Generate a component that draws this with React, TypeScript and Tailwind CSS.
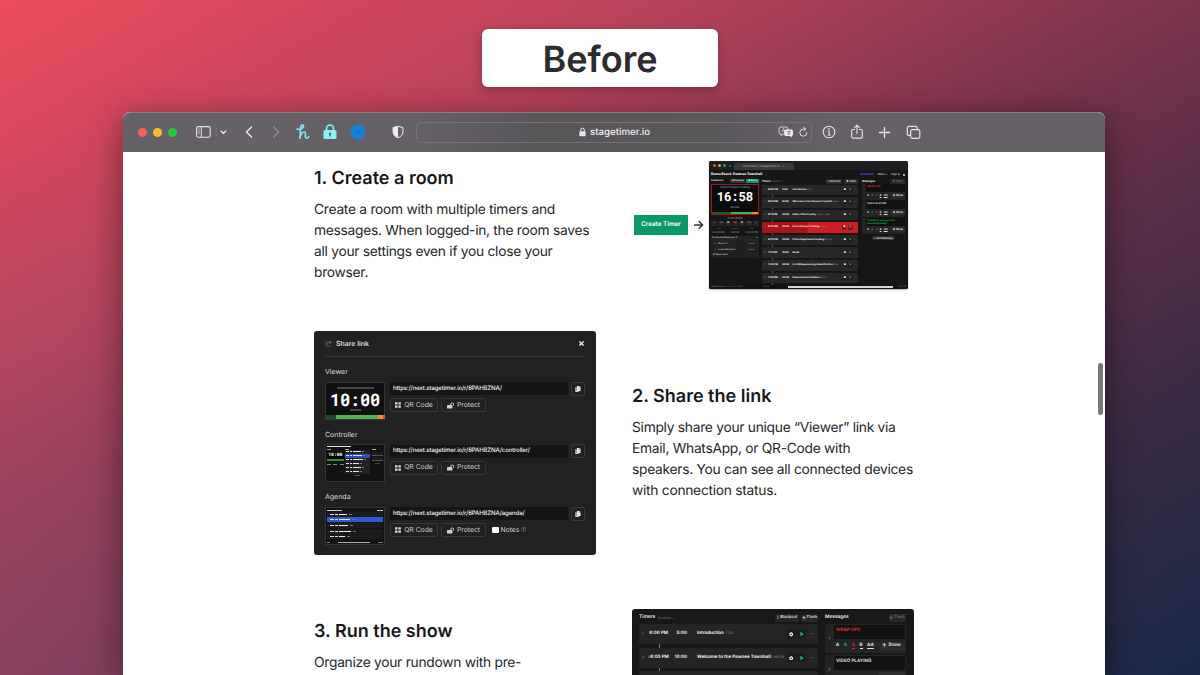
import React from "react";
import {
  FaArrowUp,
  FaCopy,
  FaLockOpen,
  FaPlay,
  FaCog,
  FaRegQuestionCircle,
  FaTimes,
  FaShareSquare,
} from "react-icons/fa";

const Dot = ({ c }: { c: string }) => <span className={`h-[9px] w-[9px] rounded-full ${c}`} />;

function Toolbar() {
  return (
    <div className="flex h-10 w-full shrink-0 items-center rounded-t-[7px] border-t border-[#8b7f86] bg-[linear-gradient(90deg,#656167_0%,#656167_30%,#59565a_42%,#5a575b_60%,#656167_72%,#656167_100%)] pb-px text-[#e6e4e7]">
      <div className="ml-[15px] flex gap-[6px]">
        <Dot c="bg-[#f2605a]" />
        <Dot c="bg-[#f6bb35]" />
        <Dot c="bg-[#2dc540]" />
      </div>
      <svg className="ml-[18px] shrink-0" width="34" height="14" viewBox="0 0 34 14" fill="none" stroke="currentColor">
        <rect x="1.6" y="1.6" width="13.6" height="10.6" rx="1.6" strokeWidth="1.1" />
        <path d="M6.3 1.6v10.6" strokeWidth="1" />
        <path d="M3 4.2h1.8M3 6.2h1.8M3 8.2h1.8" strokeWidth=".8" />
        <path d="M21.3 1v12" stroke="#79757b" strokeWidth="1" />
        <path d="M26 6l2.4 2.4L30.8 6" strokeWidth="1.4" strokeLinecap="round" strokeLinejoin="round" />
      </svg>
      <svg className="ml-[14px] shrink-0" width="44" height="14" viewBox="0 0 44 14" fill="none" strokeLinecap="round" strokeLinejoin="round">
        <path d="M8.6 2L3.4 7l5.2 5" stroke="#f1eff2" strokeWidth="1.3" />
        <path d="M30.6 2l5 5-5 5" stroke="#908c93" strokeWidth="1.2" />
      </svg>
      <svg className="ml-[7px] shrink-0" width="18" height="18" viewBox="0 0 18 18" fill="none" stroke="#86e4f2" strokeWidth="1.7" strokeLinecap="round" strokeLinejoin="round">
        <path d="M3 6C5.500 6.800 9.800 5.200 9.600 3C9.400 1.400 7 1.800 6.600 4.600L6 15.200C6.300 11.600 8.300 8.900 10.300 9C12.300 9.200 11.200 12 11.300 13.700C11.500 15.600 13.600 15.400 14.800 13.800" />
      </svg>
      <svg className="ml-[10px] shrink-0" width="16" height="18" viewBox="0 0 16 18">
        <path d="M4.600 8V5.400a3.400 3.400 0 016.800 0V8" fill="none" stroke="#8df1f5" strokeWidth="1.600" />
        <rect x="1.500" y="7" width="13" height="9" rx="1.500" fill="#8df1f5" />
        <path d="M8 9.600a1.300 1.300 0 01.6 2.400v1.400H7.400V12A1.300 1.300 0 018 9.600z" fill="#4b676e" />
      </svg>
      <svg className="ml-[12px] shrink-0" width="16" height="16" viewBox="0 0 16 16">
        <circle cx="8" cy="8" r="7.400" fill="#1583d8" />
        <path d="M4.600 8.200l6-2.600-1.200 5-1.700-1.500z" fill="#1379c9" />
      </svg>
      <svg className="ml-[26px] shrink-0" width="12" height="14" viewBox="0 0 12 14">
        <path d="M6 1.300L10.900 2.600V7c0 2.800-2 4.700-4.900 5.700C3.100 11.700 1.100 9.800 1.100 7V2.600z" fill="none" stroke="#efedf0" strokeWidth="1" />
        <path d="M6 1.300V12.700C3.100 11.700 1.100 9.800 1.100 7V2.600z" fill="#efedf0" />
      </svg>
      <div className="ml-[12px] flex h-[21px] w-[396px] shrink-0 items-center rounded-[5px] border border-[#777279]">
        <svg className="ml-[162px]" width="7" height="10" viewBox="0 0 7 10">
          <path d="M1.700 4.500V3a1.800 1.800 0 013.600 0v1.500" fill="none" stroke="#e8e6e9" strokeWidth="1" />
          <rect x=".4" y="4.300" width="6.200" height="4.900" rx=".8" fill="#e8e6e9" />
        </svg>
        <span className="ml-[4px] w-[184px] pt-[2px] text-[9.700px] font-medium leading-none text-[#f3f1f4]">stagetimer.io</span>
        <svg className="ml-[4px]" width="16" height="12" viewBox="0 0 16 12">
          <path d="M3 1h5a2 2 0 012 2v3a2 2 0 01-2 2H5L3.200 9.600V8A2 2 0 011 6V3a2 2 0 012-2z" fill="none" stroke="#dcdadd" strokeWidth=".9" />
          <path d="M4 6l1.500-3.500L7 6M4.500 5h2" fill="none" stroke="#dcdadd" strokeWidth=".7" />
          <path d="M8 3.600h5.200A1.800 1.800 0 0115 5.400v2.800a1.800 1.800 0 01-1.400 1.800v1.500L11.800 10H8a1.800 1.800 0 01-1.800-1.800V5.400A1.800 1.800 0 018 3.600z" fill="#f1eff2" />
          <path d="M8.800 5.600h4M10.800 4.800v.8M9.200 8.600c1.600-.6 2.600-1.600 2.800-3M9.600 6.600c.6 1 1.600 1.700 2.800 2" fill="none" stroke="#605c62" strokeWidth=".7" />
        </svg>
        <svg className="ml-[4px]" width="12" height="12" viewBox="0 0 12 12" fill="none" stroke="#dddbde" strokeWidth="1" strokeLinecap="round" strokeLinejoin="round">
          <path d="M9 6.600A3.600 3.600 0 115.400 3H7.200M5.700 1l1.900 2-1.900 2" />
        </svg>
      </div>
      <svg className="ml-[10px] shrink-0" width="14" height="14" viewBox="0 0 14 14" fill="none" stroke="currentColor">
        <circle cx="7" cy="7" r="5.800" strokeWidth="1.100" />
        <path d="M5.700 6h1.500v4M5.500 10h3.200" strokeWidth="1" />
        <circle cx="7" cy="3.900" r=".8" fill="currentColor" stroke="none" />
      </svg>
      <svg className="ml-[14px] shrink-0" width="14" height="16" viewBox="0 0 14 16" fill="none" stroke="currentColor" strokeWidth="1.100" strokeLinecap="round" strokeLinejoin="round">
        <path d="M4.600 5.500H3a1.300 1.300 0 00-1.300 1.300v6A1.300 1.300 0 003 14.100h8a1.300 1.300 0 001.300-1.300v-6A1.300 1.300 0 0011 5.500H9.400M7 9.500V1.300M4.700 3.400L7 1.200l2.300 2.200" />
      </svg>
      <svg className="ml-[14px] shrink-0" width="13" height="13" viewBox="0 0 13 13" stroke="currentColor" strokeWidth="1.300" strokeLinecap="round">
        <path d="M6.500 1.500v10M1.500 6.500h10" />
      </svg>
      <svg className="ml-[15px] shrink-0" width="15" height="15" viewBox="0 0 15 15" fill="none" stroke="currentColor" strokeWidth="1.200">
        <rect x="4.600" y="4.600" width="9.200" height="8.800" rx="1.800" />
        <path d="M4.600 10.400H3a1.700 1.700 0 01-1.700-1.700V3A1.700 1.700 0 013 1.300h6.400A1.700 1.700 0 0111.100 3v1.600" />
      </svg>
    </div>
  );
}

type Timer = { time: string; len: string; name: string; who: string; live?: boolean };

const timers: Timer[] = [
  { time: "6:00 PM", len: "5:00", name: "Introduction", who: "Tom" },
  { time: "6:05 PM", len: "10:00", name: "Welcome to the Pawnee Townhall", who: "Leslie" },
  { time: "6:15 PM", len: "20:00", name: "State of the Country", who: "Leslie - Ben" },
  { time: "6:35 PM", len: "20:00", name: "School Project Trading", who: "Leslie", live: true },
  { time: "6:55 PM", len: "20:00", name: "Police Department Funding", who: "Donna" },
  { time: "7:15 PM", len: "15:00", name: "Break", who: "" },
  { time: "7:30 PM", len: "20:00", name: "Lot 48 Repurposing, Beautification", who: "Ann" },
  { time: "7:50 PM", len: "20:00", name: "Pawnee Great Initiative", who: "Chris" },
];

function MiniMessage({ text, color }: { text: string; color: string }) {
  return (
    <div className="flex h-[15.500px] w-[42.500px] flex-col rounded-[1px] bg-[#242424] pl-[4px]">
      <div className={`h-[7.500px] bg-[#111] px-[1px] pt-[.800px] text-[2.500px] font-bold leading-[3.200px] ${color}`}>{text}</div>
      <div className="flex flex-1 items-center gap-[2.300px] pl-[1px] text-[2.600px] font-bold leading-none text-[#ddd]">
        <span>A</span>
        <span className="text-[#22a34a]">A</span>
        <span className="text-[#dc2626]">A</span>
        <span className="underline">B</span>
        <span className="underline">AA</span>
        <span className="ml-auto rounded-[1px] bg-[#2d2d2d] px-[1.500px] py-[1px]">⬆ Show</span>
      </div>
    </div>
  );
}

function ControllerShot() {
  return (
    <div className="flex h-[128px] w-[199px] flex-col overflow-hidden rounded-[2px] bg-[#161616] text-[#e5e5e5] shadow-[0_1px_2px_rgba(0,0,0,0.3)]">
      <div className="flex h-[9px] shrink-0 items-center bg-[#1e1f20] pl-[4px]">
        <span className="h-[2.500px] w-[2.500px] rounded-full bg-[#e0443e]" />
        <span className="ml-[2.500px] h-[2.500px] w-[2.500px] rounded-full bg-[#d9a52a]" />
        <span className="ml-[2.500px] h-[2.500px] w-[2.500px] rounded-full bg-[#27a83a]" />
        <span className="ml-[3px] h-[2px] w-[2px] rounded-[.5px] bg-[#1f6d34]" />
        <div className="ml-[3px] flex h-[7px] w-[60px] items-center self-end rounded-t-[2px] bg-[#383a3b] px-[9px] text-[3.200px] leading-none text-[#a8a8a8]">
          <span className="whitespace-nowrap">Controller | stagetimer.io</span>
          <span className="ml-auto">×</span>
        </div>
      </div>
      <div className="flex h-[9px] shrink-0 items-center pl-[2px] pr-[3px] text-[2.800px] leading-none">
        <span className="text-[3.400px] font-extrabold text-white">Demo Event: Pawnee Townhall</span>
        <span className="ml-[2px] text-[#888]">✓</span>
        <span className="ml-auto font-bold text-[#5b56e8]">UPGRADE</span>
        <span className="ml-[4px]">Menu ⌄</span>
        <span className="ml-[3px]">Sign in</span>
        <span className="ml-[3px] h-[2px] w-[2px] rounded-full bg-[#ddd]" />
      </div>
      <div className="flex flex-1 overflow-hidden">
        <div className="ml-[2px] w-[48px] shrink-0">
          <div className="flex h-[4px] items-center text-[2.300px] font-semibold leading-none">
            <span>Dashboard</span>
            <span className="ml-auto rounded-[.8px] bg-[#333] px-[1.500px] py-[.8px]">⊞ Connect</span>
            <span className="ml-[1px] rounded-[.8px] bg-[#079669] px-[2px] py-[.8px]">⧉ Share</span>
          </div>
          <div className="mt-[1px] flex h-[31px] flex-col items-center overflow-hidden border border-[#971b1b] bg-[#0c0c0c]">
            <span className="text-[2.700px] font-medium leading-[4px] text-[#62bde9]">School Project Trading</span>
            <span className="mt-[1.500px] font-['Roboto_Mono','DejaVu_Sans_Mono',monospace] text-[12.600px] font-bold leading-[13px] tracking-[-0.300px] text-white">16:58</span>
            <span className="mt-[2px] text-[2.700px] font-medium leading-[3.500px] text-[#62bde9]">Donna</span>
            <div className="mt-auto flex h-[2px] w-full">
              <span className="w-[41%] bg-[#1c5a2c]" />
              <span className="w-[45%] bg-[#4caf50]" />
              <span className="flex-1 bg-[#ef8c35]" />
            </div>
          </div>
          <div className="mt-[1px] flex h-[4px] items-center justify-center text-[2.600px] font-semibold leading-none text-[#a36a6a]">6:35:10 PM</div>
          <div className="mt-[1px] flex h-[5px] justify-between gap-[.8px] text-[2.400px] leading-[4.500px]">
            {["«", "-1m", "■", "▮▮", "●", "+1m", "»"].map((s, i) => (
              <span key={i} className={`flex-1 rounded-[.5px] bg-[#262626] text-center ${i === 3 ? "text-[#e12d2d]" : "text-[#bbb]"}`}>{s}</span>
            ))}
          </div>
          <div className="mt-[2px] flex justify-between px-[1px] text-[2.300px] leading-[4px] text-[#aaa]">
            {["Start", "Duration", "End"].map((s, i) => (
              <span key={s} className="flex flex-col items-center leading-[4px]">
                <span className="text-[1.800px] leading-[3px] text-[#777]">{s}</span>
                <span>{["6:35:00 PM", "0:20:00", "6:55:00 PM"][i]}</span>
              </span>
            ))}
          </div>
          <div className="mt-[1px] flex h-[4.500px] items-center bg-[#242424] px-[1px] text-[2.400px] leading-none">
            Connected Devices: 2<span className="ml-auto">⋯</span>
          </div>
          <div className="mt-[.5px] bg-[#202020] px-[4px] text-[2.400px] leading-[5.500px]">
            <div className="flex">▹ &nbsp; Device 1<span className="ml-auto text-[#888]">viewer</span></div>
            <div className="flex">▹ &nbsp; Leslie Dachson<span className="ml-auto text-[#888]">viewer</span></div>
          </div>
          <div className="bg-[#202020] px-[2px] text-[2.400px] leading-[5.500px]">⇄ Share Link</div>
        </div>
        <div className="ml-[3px] w-[96px] shrink-0">
          <div className="flex h-[5px] items-center text-[2.600px] font-bold leading-none">
            Timers<span className="ml-[2px] font-normal text-[#777]">Actions ⌄</span>
            <span className="ml-auto rounded-[1px] bg-[#2a2a2a] px-[2px] py-[.8px] font-medium">▯ Blackout</span>
            <span className="ml-[1.500px] rounded-[1px] bg-[#2a2a2a] px-[2px] py-[.8px] font-medium">⬆ Flash</span>
          </div>
          <div className="mt-[.500px] flex flex-col">
            {timers.map((t, i) => (
              <React.Fragment key={t.time}>
                <div className={`flex h-[10.500px] shrink-0 items-center rounded-[1px] text-[2.400px] font-bold leading-none text-white ${t.live ? "bg-[linear-gradient(90deg,#a81417_0%,#a81417_47%,#cf1d22_48%,#cf1d22_100%)]" : "bg-[#272727]"}`}>
                  <span className="w-[6px] pl-[2px] font-normal text-[#777]">{i + 1}</span>
                  <span className="w-[14px] whitespace-nowrap">{t.time}</span>
                  <span className="w-[10.500px]">{t.len}</span>
                  <span className="whitespace-nowrap">
                    {t.name} <span className="font-normal text-[#999]">{t.who}</span>
                  </span>
                  <span className="ml-auto rounded-[.7px] bg-[#1b1b1b]/50 px-[1px] py-[1px]">●</span>
                  <span className={`ml-[1.500px] rounded-[.7px] bg-[#1b1b1b]/60 px-[1px] py-[1px] ${t.live ? "text-[#ff5252]" : "text-[#21b14b]"}`}>{t.live ? "▮▮" : "▶"}</span>
                  <span className="ml-[1.500px] mr-[1.500px] font-normal text-[#777]">⋯</span>
                </div>
                <div className="ml-[10px] h-[2.100px] w-[.6px] shrink-0 bg-[#555]" />
              </React.Fragment>
            ))}
          </div>
        </div>
        <div className="ml-[4px] w-[42.500px] shrink-0">
          <div className="flex h-[5px] items-center text-[2.600px] font-bold leading-none">
            Messages<span className="ml-auto rounded-[1px] bg-[#2a2a2a] px-[2px] py-[.8px] font-medium text-[#777]">⬆ Flash</span>
          </div>
          <div className="flex flex-col gap-[1.500px]">
            <MiniMessage text="WRAP UP!!" color="text-[#e5322d]" />
            <MiniMessage text="VIDEO PLAYING" color="text-[#dddddd]" />
            <MiniMessage text="Thanks to everyone for attending today!" color="text-[#1faa47]" />
          </div>
          <div className="mx-auto mt-[2px] w-[22px] rounded-[1px] bg-[#2b2b2b] text-center text-[2.600px] font-medium leading-[4.500px]">+ Add Message</div>
        </div>
      </div>
      <div className="flex h-[4px] shrink-0 items-center bg-[#111] px-[2px] text-[2.200px] leading-none text-[#888]">
        <span className="w-[50px] whitespace-nowrap">stagetimer.io v2.4 &nbsp; 6:37:51 PM</span>
        <span className="w-[27px] pl-[2px]">30:35</span>
        <span className="flex h-[1.500px] w-[105px] gap-[.6px]">
          {[8, 14, 20, 16, 20, 14, 13].map((w, i) => (
            <span key={i} className="h-full bg-[#d5d5d5]" style={{ width: w }} />
          ))}
        </span>
        <span className="ml-auto whitespace-nowrap">8:10 PM</span>
      </div>
    </div>
  );
}

const Bar = ({ c }: { c: string }) => <span className={`block h-[1px] shrink-0 ${c}`} />;

function ViewerThumb() {
  return (
    <div className="flex h-[38px] w-[60px] shrink-0 flex-col items-center border border-[#333] bg-[#101010]">
      <span className="mt-[4px] h-[2px] w-[37px] shrink-0 bg-[#484848]" />
      <span className="mt-[3px] font-['Roboto_Mono','DejaVu_Sans_Mono',monospace] text-[17.200px] font-bold leading-[16px] tracking-[-0.300px] text-white">10:00</span>
      <span className="mt-[1px] h-[2px] w-[11px] shrink-0 bg-[#484848]" />
      <div className="-mx-px mt-auto flex h-[4px] w-[60px] shrink-0">
        <span className="w-[10.500px] bg-[#1d4a2a]" />
        <span className="w-[42px] bg-[#4fb257]" />
        <span className="w-[5px] bg-[#f08c3c]" />
        <span className="flex-1 bg-[#e0483c]" />
      </div>
    </div>
  );
}

function ControllerThumb() {
  return (
    <div className="flex h-[38px] w-[60px] shrink-0 flex-col overflow-hidden border border-[#333] bg-[#131313] px-[1px] pt-[1px]">
      <Bar c="w-[24px] bg-[#e5e5e5]" />
      <div className="mt-[1.500px] flex">
        <div className="w-[17px]">
          <Bar c="w-[4px] bg-[#999]" />
          <div className="mt-[1px] h-[8px] bg-[#080808] text-center font-['Roboto_Mono','DejaVu_Sans_Mono',monospace] text-[4.700px] font-bold leading-[8px] text-white">10:00</div>
          <div className="h-[2px] bg-[#2f9146]" />
          <div className="mt-[3px] flex justify-between">
            <Bar c="w-[4px] bg-[#888]" />
            <Bar c="w-[4px] bg-[#888]" />
            <Bar c="w-[4px] bg-[#888]" />
          </div>
        </div>
        <div className="ml-[1px] flex w-[26px] flex-col">
          <Bar c="w-[4px] bg-[#aaa]" />
          {[16, 17, 18, 14, 16, 14].map((w, i) => (
            <div key={i} className={`mt-[.500px] flex h-[3.500px] items-center gap-[1px] px-[1px] ${i === 1 ? "bg-[#294bc4]" : "bg-[#222]"}`}>
              <Bar c="w-[3px] bg-[#ddd]" />
              <Bar c="w-[2px] bg-[#ddd]" />
              <span className="h-[1px] bg-[#e5e5e5]" style={{ width: w - 8 }} />
              <Bar c="w-[2px] bg-[#777]" />
            </div>
          ))}
          <span className="mx-auto mt-[1px] h-[.800px] w-[6px] bg-[#555]" />
        </div>
        <div className="ml-[2px] w-[11px]">
          <Bar c="w-[4px] bg-[#aaa]" />
          <div className="mt-[2px] h-[4px] border-b border-[#555] bg-[#1e1e1e]" />
          <div className="mt-[1px] h-[4px] border-b border-[#555] bg-[#1e1e1e]" />
          <span className="mx-auto mt-[2px] block h-[1px] w-[5px] bg-[#444]" />
        </div>
      </div>
    </div>
  );
}

function AgendaThumb() {
  return (
    <div className="flex h-[38px] w-[60px] shrink-0 flex-col border border-[#333] bg-[#131313] px-[1px] pt-[2px]">
      <div className="flex justify-between">
        <Bar c="w-[15px] bg-[#ccc]" />
        <Bar c="w-[6px] bg-[#ccc]" />
      </div>
      <div className="mt-[1px] flex flex-col gap-[.700px]">
        {[8, 11, 9, 12, 6].map((w, i) => (
          <div key={i} className={`flex h-[5px] items-center gap-[1.200px] px-[3px] ${i === 1 ? "bg-[#3157d6]" : "bg-[#1b1b1b]"}`}>
            <Bar c="w-[4px] bg-[#ddd]" />
            <Bar c="w-[3px] bg-[#ddd]" />
            <span className="h-[1px] bg-[#eee]" style={{ width: w }} />
            <Bar c="w-[3px] bg-[#777]" />
          </div>
        ))}
      </div>
      <div className="mt-auto flex items-center gap-[2px] pb-[.500px]">
        <Bar c="w-[3px] bg-[#777]" />
        <Bar c="ml-[6px] w-[32px] bg-[#aaa]" />
        <Bar c="ml-auto w-[5px] bg-[#777]" />
      </div>
    </div>
  );
}

function LinkRow({ label, url, thumb, notes }: { label: string; url: string; thumb: React.ReactNode; notes?: boolean }) {
  return (
    <div className="h-[62.500px]">
      <div className="h-[14.500px] text-[7px] leading-[10px] text-[#dcdcdc]">{label}</div>
      <div className="flex">
        {thumb}
        <div className="ml-[5px] flex-1">
          <div className="flex items-center">
            <div className="flex h-[13px] w-[178px] items-center rounded-[1.500px] bg-[#151515] px-[3px] pt-[1px] text-[6.100px] font-medium leading-none tracking-[-0.170px] text-[#f0f0f0]">{url}</div>
            <div className="ml-[3px] flex h-[14px] w-[14px] items-center justify-center rounded-[1.500px] border border-[#383838]">
              <FaCopy size={6} color="#e4e4e4" />
            </div>
          </div>
          <div className="mt-[2.500px] flex items-center text-[6.800px] leading-none text-[#cfcfcf]">
            <div className="flex h-[14px] w-[48px] items-center justify-center gap-[3px] rounded-[1.500px] border border-[#363636]">
              <svg width="6" height="6" viewBox="0 0 6 6" fill="#d6d6d6">
                <path d="M0 .3h2.500v2.300H0zM3.400 .3h2.500v2.300H3.400zM0 3.400h2.500v2.300H0zM3.400 3.400h2.500v2.300H3.400z" />
              </svg>
              QR Code
            </div>
            <div className="ml-[3px] flex h-[14px] w-[45px] items-center justify-center gap-[3px] rounded-[1.500px] border border-[#363636]">
              <FaLockOpen size={7} />
              Protect
            </div>
            {notes && (
              <div className="ml-[6px] flex items-center gap-[2px]">
                <span className="h-[6.500px] w-[6.500px] rounded-[1px] bg-white" />
                Notes
                <FaRegQuestionCircle size={5} color="#777" />
              </div>
            )}
          </div>
        </div>
      </div>
    </div>
  );
}

function ShareCard() {
  return (
    <div className="h-[224px] w-[282px] rounded-[3px] bg-[#212121] px-[11px]">
      <div className="flex h-[26px] items-center border-b border-[#353535] text-[7px] leading-none text-[#ececec]">
        <FaShareSquare size={7} color="#555" />
        <span className="ml-[4px] font-medium">Share link</span>
        <FaTimes className="ml-auto" size={7} color="#eee" />
      </div>
      <div className="pt-[10px]">
        <LinkRow label="Viewer" url="https://next.stagetimer.io/r/6PAH8ZNA/" thumb={<ViewerThumb />} />
        <LinkRow label="Controller" url="https://next.stagetimer.io/r/6PAH8ZNA/controller/" thumb={<ControllerThumb />} />
        <LinkRow label="Agenda" url="https://next.stagetimer.io/r/6PAH8ZNA/agenda/" thumb={<AgendaThumb />} notes />
      </div>
    </div>
  );
}

function ShowMessage({ n, text, color, tools }: { n: number; text: string; color: string; tools?: boolean }) {
  return (
    <div className="flex h-[29px] shrink-0 rounded-[1.500px] bg-[#242424]">
      <div className="flex w-[9px] items-center justify-center pt-[1px] text-[4px] leading-none text-[#888]">{n}</div>
      <div className="flex-1 pr-[1px] pt-[1px]">
        <div className={`h-[14px] rounded-[1px] bg-[#121212] px-[2px] text-[4.600px] font-semibold leading-[11px] ${color}`}>{text}</div>
        {tools ? (
          <div className="flex h-[13px] items-center gap-[4.500px] pl-[2px] text-[4.600px] font-bold leading-[5px] text-[#e5e5e5]">
            <span>A</span>
            <span className="text-[#22b14c]">A</span>
            <span className="border-b border-[#dc2626] text-[#dc2626]">A</span>
            <span className="border-b border-[#ddd]">B</span>
            <span className="border-b border-[#ddd]">AA</span>
            <span className="ml-auto flex h-[8px] w-[26px] items-center justify-center gap-[1.500px] rounded-[1px] bg-[#2c2c2c] font-semibold">
              <FaArrowUp size={4.5} />
              Show
            </span>
          </div>
        ) : (
          <div className="ml-auto mt-[2px] h-[8px] w-[26px] rounded-[1px] bg-[#2f2f2f]" />
        )}
      </div>
    </div>
  );
}

function RundownCard() {
  return (
    <div className="flex h-[66px] w-[282px] overflow-hidden rounded-t-[3px] bg-[#181818] pl-[7px] pt-[2px] text-[#ededed]">
      <div className="w-[179px] shrink-0">
        <div className="flex h-[12px] items-center pt-[1px] text-[4.800px] font-semibold leading-none">
          Timers<span className="ml-[2.500px] text-[3.800px] font-normal text-[#777]">Actions ⌄</span>
          <span className="ml-auto flex h-[8px] w-[24px] items-center justify-center whitespace-nowrap rounded-[1px] bg-[#262626] text-[4.100px] font-medium">▯ Blackout</span>
          <span className="ml-[2px] flex h-[8px] w-[17px] items-center justify-center gap-[1px] rounded-[1px] bg-[#262626] text-[4.100px] font-medium">
            <FaArrowUp size={4} />
            Flash
          </span>
        </div>
        <div className="mt-[1px] flex flex-col">
          {timers.slice(0, 2).map((t, i) => (
            <React.Fragment key={t.time}>
              <div className="flex h-[20px] shrink-0 items-center rounded-[1.500px] bg-[#242424] pt-[.500px] text-[4.500px] font-bold leading-none">
                <span className="w-[9px] pl-[3px] text-[4px] font-normal text-[#777]">{i + 1}</span>
                <span className="w-[20px] whitespace-nowrap text-right">{i > 0 && "♪"}{t.time}</span>
                <span className="w-[19px] text-right">{t.len}</span>
                <span className="ml-[10px] whitespace-nowrap">
                  {t.name} <span className="font-normal text-[#777]">{t.who}</span>
                </span>
                <span className="ml-auto flex h-[9px] w-[9px] items-center justify-center rounded-[1px] bg-[#1c1c1c]">
                  <FaCog size={4.5} />
                </span>
                <span className="ml-[1.500px] flex h-[9px] w-[9px] items-center justify-center rounded-[1px] bg-[#1c1c1c]">
                  <FaPlay size={4} color="#18b04a" />
                </span>
                <span className="ml-[4px] mr-[4px] text-[4px] text-[#888]">⋯</span>
              </div>
              <div className="ml-[19.500px] h-[3.500px] w-px shrink-0 bg-[#777]" />
            </React.Fragment>
          ))}
          <div className="h-[20px] shrink-0 rounded-[1.500px] bg-[#242424]" />
        </div>
      </div>
      <div className="ml-[7px] w-[80.500px] shrink-0">
        <div className="flex h-[12px] items-center pt-[1px] text-[4.800px] font-semibold leading-none">
          Messages
          <span className="ml-auto flex h-[8px] w-[17px] items-center justify-center gap-[1px] rounded-[1px] bg-[#282828] text-[4.100px] font-medium text-[#777]">
            <FaArrowUp size={4} />
            Flash
          </span>
        </div>
        <div className="mt-[1px] flex flex-col gap-[2px]">
          <ShowMessage n={1} text="WRAP UP!!" color="text-[#e8322e]" tools />
          <ShowMessage n={2} text="VIDEO PLAYING" color="text-[#e5e5e5]" />
        </div>
      </div>
    </div>
  );
}

function Step({ title, lines }: { title: string; lines: string[] }) {
  return (
    <div className="w-[282px]">
      <h2 className="text-[18px] font-semibold leading-[26px] text-[#16181b]">{title}</h2>
      <p className="mt-[7.500px] whitespace-nowrap text-[13.800px] leading-[21px] tracking-[-0.280px] text-[#24272b]">
        {lines.map((l) => (
          <span key={l} className="block">{l}</span>
        ))}
      </p>
    </div>
  );
}

export default function App() {
  return (
    <div className="flex h-[675px] w-[1200px] flex-col items-center overflow-hidden bg-[radial-gradient(ellipse_at_0%_100%,rgba(150,80,115,0.5)_0%,rgba(150,80,115,0)_55%),linear-gradient(to_bottom_right,#eb4c5e_0%,#b8425a_28%,#74324b_52%,#3b2a45_78%,#182846_100%)] font-['Inter','Liberation_Sans',sans-serif] [text-rendering:geometricPrecision]">
      <div className="mt-[29px] flex h-[58px] w-[236px] shrink-0 items-center justify-center rounded-[6px] bg-white pt-px text-[36px] font-semibold leading-none text-[#2c2c2e] shadow-[0_3px_10px_rgba(0,0,0,0.25)]">
        Before
      </div>
      <div className="ml-[28px] mt-[25px] flex h-[563px] w-[982px] shrink-0 flex-col rounded-t-[7px] bg-white shadow-[0_8px_34px_rgba(0,0,0,0.45)]">
        <Toolbar />
        <div className="flex flex-1">
          <div className="ml-[191px] w-[600px] pt-[9px]">
            <div className="flex h-[128px] items-center">
              <Step title="1. Create a room" lines={["Create a room with multiple timers and", "messages. When logged-in, the room saves", "all your settings even if you close your", "browser."]} />
              <div className="ml-[38px] flex h-[20px] w-[54px] shrink-0 items-center justify-center whitespace-nowrap bg-[#0a986b] text-[6.300px] font-semibold text-white">Create Timer</div>
              <svg className="ml-[5px] shrink-0" width="11" height="10" viewBox="0 0 11 10" fill="none" stroke="#333" strokeWidth="1.500">
                <path d="M1 5h8.500M5.800 1.300L9.500 5 5.800 8.700" />
              </svg>
              <div className="ml-[5px] shrink-0">
                <ControllerShot />
              </div>
            </div>
            <div className="mt-[42px] flex h-[224px] items-center">
              <ShareCard />
              <div className="ml-[36px]">
                <Step title="2. Share the link" lines={["Simply share your unique “Viewer” link via", "Email, WhatsApp, or QR-Code with", "speakers. You can see all connected devices", "with connection status."]} />
              </div>
            </div>
            <div className="mt-[54px] flex h-[66px]">
              <div className="pt-[10px]">
                <Step title="3. Run the show" lines={["Organize your rundown with pre-"]} />
              </div>
              <div className="ml-[36px]">
                <RundownCard />
              </div>
            </div>
          </div>
          <div className="ml-auto mr-[2px] mt-[211px] h-[52px] w-[5px] rounded-full bg-[#777]" />
        </div>
      </div>
    </div>
  );
}
